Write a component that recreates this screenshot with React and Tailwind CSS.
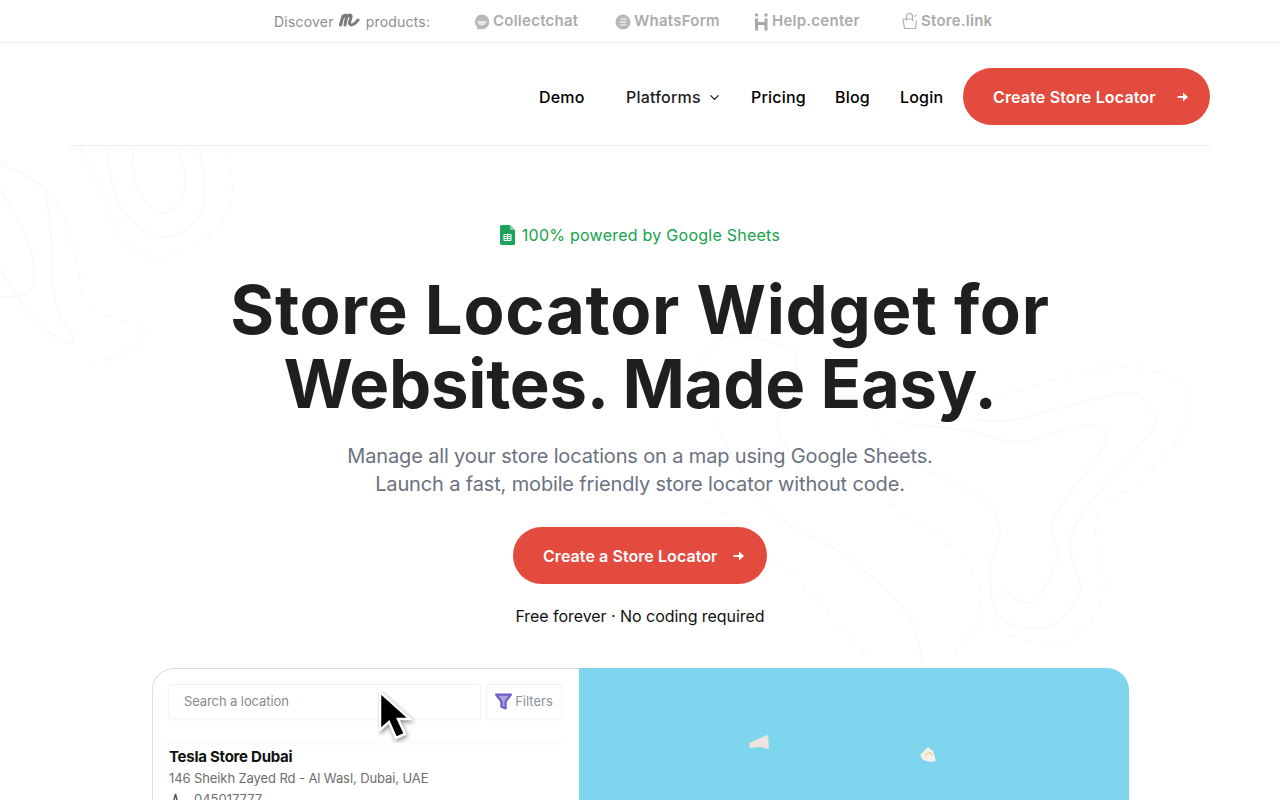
import { ChevronDown } from 'lucide-react';

const products = [
  { name: 'Collectchat', icon: 'chat', width: 'w-[141px]' },
  { name: 'WhatsForm', icon: 'form', width: 'w-[139px]' },
  { name: 'Help.center', icon: 'help', width: 'w-[148px]' },
  { name: 'Store.link', icon: 'bag', width: 'w-[95px]' },
];

const ProductIcon = ({ type }) => {
  if (type === 'chat') {
    return (
      <svg width="16" height="16" viewBox="0 0 16 16">
        <path d="M8 0.5a7.3 7.3 0 0 1 7.3 7.3A7.3 7.3 0 0 1 8 15.2H3.2V13A7.3 7.3 0 0 1 8 .5z" fill="#b9b9b9" />
        <path d="M3.500 7h9a4.500 4.500 0 0 1-9 0z" fill="#e6e6e6" />
      </svg>
    );
  }
  if (type === 'form') {
    return (
      <svg width="16" height="16" viewBox="0 0 16 16">
        <circle cx="8" cy="8" r="7.5" fill="#b9b9b9" />
        <path d="M5 5.200h6M5 8h6M5 10.800h6" stroke="#eeeeee" strokeWidth="1.3" />
      </svg>
    );
  }
  if (type === 'help') {
    return (
      <svg width="15" height="18" viewBox="0 0 15 18">
        <circle cx="2.500" cy="2" r="1.700" fill="#a8a8a8" />
        <circle cx="12" cy="2" r="1.700" fill="#a8a8a8" />
        <path d="M2.500 5.500v12M12 5.500v12M2.500 10.500h9.500" stroke="#a8a8a8" strokeWidth="3" fill="none" />
      </svg>
    );
  }
  return (
    <svg width="16" height="17" viewBox="0 0 16 17" fill="none" stroke="#b0b0b0" strokeWidth="1.2">
      <path d="M1 6h10.500M14.500 7.500l-1 8h-11L1 6" strokeLinejoin="round" />
      <path d="M4.500 8V3.500a3 3 0 0 1 6 0V8M12.500 3.500l2-1.500" />
    </svg>
  );
};

const TopBar = () => (
  <div className="h-[43px] border-b border-[#ececec] flex items-center pl-[274px] text-[#8d8d8d] bg-white">
    <div className="flex items-center text-[14px] tracking-[0.2px] w-[200px]">
      <span>Discover</span>
      <svg className="mx-[4px] -mt-[2px]" width="24" height="14" viewBox="0 0 24 14" fill="none" stroke="#7a7a7a" strokeWidth="3" strokeLinecap="round" strokeLinejoin="round">
        <path d="M2.500 12L5 3M5.500 3.500c2.500-2.500 3.500-1.500 3 .5L7 12M9.500 3.500c2.500-2.500 4-1.500 3.500.5L11.500 9.500c-.5 3 2.500 2.800 4.500 1.500 1.500-1 3-2.500 4-4" />
      </svg>
      <span>products:</span>
    </div>
    {products.map((p) => (
      <div key={p.name} className={`flex items-center gap-[3px] pt-[1px] text-[15px] font-semibold tracking-[0.25px] text-[#ababab] ${p.width}`}>
        <ProductIcon type={p.icon} />
        <span>{p.name}</span>
      </div>
    ))}
  </div>
);

const ArrowIcon = () => (
  <svg width="12" height="12" viewBox="0 0 12 12" fill="none" stroke="white" strokeWidth="1.8">
    <path d="M.5 6h6" />
    <path d="M6 1.500L11 6l-5 4.500z" fill="white" stroke="none" />
  </svg>
);

const Nav = () => (
  <div className="mx-[70px] h-[103px] pt-[4px] border-b border-[#ececec] flex items-center text-[16px] font-medium text-black tracking-[0.2px]">
    <nav className="flex items-center ml-[469px] pt-[2px]">
      <a className="w-[87px]">Demo</a>
      <a className="w-[125px] flex items-center gap-[6px] text-[#1c1c1c]">
        Platforms <ChevronDown size={15} strokeWidth={2} />
      </a>
      <a className="w-[84px]">Pricing</a>
      <a className="w-[65px]">Blog</a>
      <a className="w-[63px]">Login</a>
    </nav>
    <a className="w-[247px] h-[57px] pt-[1px] rounded-full bg-[#e34b3f] text-white font-semibold flex items-center pl-[30px] gap-[21px] text-[16px] tracking-[0.15px]">
      Create Store Locator <ArrowIcon />
    </a>
  </div>
);

const SheetIcon = () => (
  <svg width="15" height="20" viewBox="0 0 15 20">
    <path d="M1.500 0H10l5 5v13.500a1.500 1.500 0 0 1-1.500 1.500h-12A1.500 1.500 0 0 1 0 18.500v-17A1.500 1.500 0 0 1 1.500 0z" fill="#1ca45c" />
    <path d="M10 0l5 5h-3.500A1.500 1.500 0 0 1 10 3.500z" fill="#8ed1a8" />
    <path d="M4 9.500h7v6H4zM4 11.500h7M4 13.500h7M7.500 9.500v6" fill="none" stroke="white" strokeWidth="1" />
  </svg>
);

// catmull-rom through the points, the contour lines are all traced this way
const smooth = (pts) => {
  let d = `M${pts[0][0]} ${pts[0][1]}`;
  for (let i = 0; i < pts.length - 1; i++) {
    const p0 = pts[i - 1] || pts[i];
    const p1 = pts[i];
    const p2 = pts[i + 1];
    const p3 = pts[i + 2] || p2;
    const c1x = p1[0] + (p2[0] - p0[0]) / 6;
    const c1y = p1[1] + (p2[1] - p0[1]) / 6;
    const c2x = p2[0] - (p3[0] - p1[0]) / 6;
    const c2y = p2[1] - (p3[1] - p1[1]) / 6;
    d += `C${c1x} ${c1y} ${c2x} ${c2y} ${p2[0]} ${p2[1]}`;
  }
  return d;
};

const solidLines = [
  [[133, 147], [136, 185], [157, 212], [178, 205], [185, 178], [178, 147]],
  [[105, 147], [122, 210], [165, 237], [200, 215], [205, 180], [198, 147]],
  [[0, 165], [40, 185], [50, 225], [55, 300], [72, 335], [68, 343], [35, 320], [0, 270]],
  [[0, 190], [28, 240], [34, 280], [25, 295], [0, 297]],
  [[973, 418], [1013, 420], [1123, 393], [1150, 410], [1150, 432], [1073, 530], [1080, 590], [1047, 627], [1000, 617], [990, 570], [1000, 530], [980, 497], [913, 463], [880, 433], [873, 400], [885, 370]],
  [[897, 423], [963, 430], [1020, 442], [1087, 425], [1105, 443], [1053, 520], [1058, 557], [1033, 602], [1003, 590]],
  [[713, 420], [767, 507], [847, 557], [907, 613], [923, 665]],
  [[697, 362], [730, 336], [788, 348], [795, 375], [778, 425], [800, 470]],
];

const dashedLines = [
  [[80, 147], [110, 212], [125, 245], [165, 258], [215, 230], [232, 195], [225, 147]],
  [[0, 160], [50, 195], [75, 250], [85, 300], [120, 320], [145, 330], [140, 345], [120, 355], [95, 365]],
  [[997, 397], [1113, 367], [1180, 383], [1187, 420], [1147, 477], [1097, 517], [1103, 597], [1057, 645], [997, 630]],
  [[707, 500], [807, 590], [873, 665]],
  [[887, 503], [963, 557], [980, 613], [947, 665]],
];

const Contours = () => (
  <svg className="absolute left-0 top-[145px] pointer-events-none" width="1280" height="525" viewBox="0 145 1280 525" fill="none" stroke="#fafafa" strokeWidth="2">
    {solidLines.map((pts, i) => <path key={i} d={smooth(pts)} />)}
    {dashedLines.map((pts, i) => <path key={i} d={smooth(pts)} strokeDasharray="7 11" strokeWidth="2.500" />)}
  </svg>
);

const Cursor = () => (
  <svg className="absolute left-[225px] top-[22px]" width="38" height="52" viewBox="0 0 38 52">
    <path d="M2 1v38l9-8 7 16 9-4-7-15h12z" fill="black" stroke="white" strokeWidth="2.500" style={{ filter: 'drop-shadow(1px 2px 2px rgba(0,0,0,0.45))' }} />
  </svg>
);

const DemoCard = () => (
  <div className="ml-[152px] mr-[151px] mt-[40px] h-[200px] flex overflow-hidden relative">
    <div className="w-[427px] shrink-0 relative bg-white border-t border-l border-[#dedede] rounded-tl-[22px]">
      <div className="flex gap-[5px] pl-[15px] pt-[15px] pb-[22px] shadow-[0_8px_10px_-10px_rgba(0,0,0,0.05)]">
        <div className="w-[313px] h-[35px] border border-[#f3f3f3] rounded-[2px] flex items-center pl-[15px] text-[13px] tracking-[-0.1px] text-[#8a8a8a] shadow-[0_1px_3px_rgba(0,0,0,0.03)]">Search a location</div>
        <div className="w-[76px] h-[35px] border border-[#f3f3f3] rounded-[2px] flex items-center justify-center gap-[3px] text-[13px] text-[#8f8f9c] shadow-[0_1px_3px_rgba(0,0,0,0.03)]">
          <svg width="17" height="17" viewBox="0 0 16 16"><path d="M1 1.500h14L10 8v6.500l-4-1.500V8z" fill="#a9a3e0" stroke="#6a5fc9" strokeWidth="2" strokeLinejoin="round" /></svg>
          Filters
        </div>
      </div>
      <div className="pl-[16px] pt-[6px]">
        <div className="text-[15px] font-bold text-[#111] leading-[20px] tracking-[-0.25px]">Tesla Store Dubai</div>
        <div className="text-[13px] text-[#6e6e6e] leading-[18px] mt-[2px] tracking-[-0.1px]">146 Sheikh Zayed Rd - Al Wasl, Dubai, UAE</div>
        <div className="flex items-center gap-[15px] text-[13px] text-[#6e6e6e] leading-[18px] mt-[3px] pl-[3px]">
          <svg width="7" height="12" viewBox="0 0 7 12" fill="none" stroke="#555555" strokeWidth="1.500"><path d="M1 11L3.500 1 6 11" /></svg>
          045017777
        </div>
      </div>
      <Cursor />
    </div>
    <div className="flex-1 bg-[#7dd6ee] relative rounded-tr-[22px]">
      <svg className="absolute left-[169px] top-[66px]" width="22" height="16" viewBox="0 0 22 16">
        <path d="M1 9l7-3 9-4 3-1 1 14-9-2-10 1z" fill="#efe3de" />
      </svg>
      <svg className="absolute left-[340px] top-[78px]" width="18" height="18" viewBox="0 0 18 18">
        <path d="M1 9l8-8 5 4 3 10-6 1-7-2z" fill="#f4f0e6" />
        <path d="M6 9l5-3 2 4" fill="none" stroke="#e8c766" strokeWidth="1" />
      </svg>
    </div>
  </div>
);

export default function App() {
  return (
    <div className="relative h-screen overflow-hidden bg-white font-['Inter',sans-serif]">
      <Contours />
      <div className="relative">
        <TopBar />
        <Nav />
        <div className="flex flex-col items-center pt-[79px]">
          <div className="flex items-center gap-[7px] text-[16px] text-[#16a34a] leading-[20px] tracking-[0.25px]">
            <SheetIcon /> 100% powered by Google Sheets
          </div>
          <h1 className="mt-[28px] text-[67px] leading-[74px] font-bold text-[#1f1f1f] text-center">
            <span className="block tracking-[0.7px]">Store Locator Widget for</span>
            <span className="block tracking-[-0.25px]">Websites. Made Easy.</span>
          </h1>
          <p className="mt-[21px] text-[20px] leading-[28px] text-[#6b7280] text-center tracking-[-0.15px]">
            Manage all your store locations on a map using Google Sheets.<br />
            Launch a fast, mobile friendly store locator without code.
          </p>
          <a className="mt-[29px] w-[254px] h-[57px] rounded-full bg-[#e34b3f] text-white font-semibold flex items-center pl-[30px] gap-[15px] text-[16px] tracking-[0.07px]">
            Create a Store Locator <ArrowIcon />
          </a>
          <div className="mt-[20px] text-[16px] leading-[24px] text-[#111] tracking-[-0.05px]">Free forever · No coding required</div>
        </div>
        <DemoCard />
      </div>
    </div>
  );
}
